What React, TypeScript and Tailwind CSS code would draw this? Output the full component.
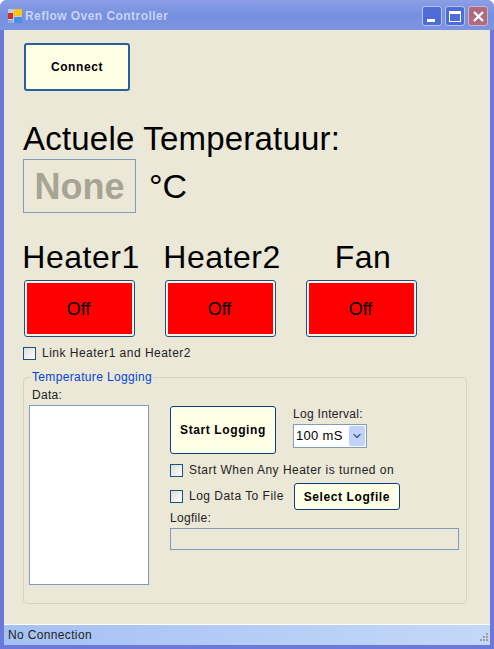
import { ChevronDown } from "lucide-react";

const font = "font-['Liberation_Sans',Arial,sans-serif]";

function HeaterColumn({ label }: { label: string }) {
  return (
    <div className="flex w-[111px] flex-col items-center">
      <div className="h-[43px] whitespace-nowrap pl-[3px] text-[32px] leading-[43px] tracking-[0.5px] text-black">{label}</div>
      <button className="mt-[1px] h-[57px] w-[111px] rounded-[3px] border border-[#1f4e79] bg-[#f6f5ee] p-[2px]">
        <span className="flex h-full w-full items-center justify-center bg-[#ff0000] pr-[2px] pt-[2px] text-[18px] text-black">Off</span>
      </button>
    </div>
  );
}

function CheckBox({ label }: { label: string }) {
  return (
    <div className="flex items-center">
      <span className="h-[13px] w-[13px] shrink-0 border border-[#1c5180] bg-gradient-to-br from-[#dcdcd7] to-white" />
      <span className="ml-[6px] whitespace-nowrap text-[12px] leading-[14px] tracking-[0.48px] text-[#222]">{label}</span>
    </div>
  );
}

function YellowButton({ label, className }: { label: string; className: string }) {
  return (
    <button
      className={`flex items-center justify-center rounded-[3px] bg-[#ffffe6] text-[12px] font-bold tracking-[0.6px] text-black ${className}`}
    >
      {label}
    </button>
  );
}

export default function App() {
  return (
    <div className={`flex h-[649px] w-[494px] flex-col overflow-hidden rounded-t-[7px] bg-[#6c78dc] ${font}`}>
      {/* Title bar */}
      <div className="flex h-[30px] shrink-0 items-center bg-gradient-to-b from-[#8b9fe6] via-[#7690e0] to-[#7b95e2] pl-[8px] pr-[6px]">
        <svg width="14" height="14" viewBox="0 0 14 14" className="mt-[2px]">
          <rect x="0" y="0" width="14" height="14" fill="#c8c8d8" />
          <rect x="6" y="0" width="8" height="7" fill="#f5c518" />
          <rect x="0" y="4" width="5" height="6" fill="#d03020" />
          <rect x="6" y="8" width="8" height="6" fill="#4a90e0" />
          <rect x="0" y="11" width="5" height="3" fill="#8ab0e8" />
        </svg>
        <span className="ml-[3px] mt-[1px] text-[12px] font-bold tracking-[0.45px] text-[#c9d4f4]">Reflow Oven Controller</span>
        <div className="ml-auto mt-[2px] flex gap-[3px]">
          <div className="flex h-[20px] w-[20px] items-end rounded-[3px] border border-[#b4c4f0] bg-[#4f6bd8] pb-[3px] pl-[4px]">
            <span className="h-[3px] w-[8px] bg-white" />
          </div>
          <div className="flex h-[20px] w-[20px] items-center justify-center rounded-[3px] border border-[#b4c4f0] bg-[#4f6bd8]">
            <span className="h-[11px] w-[12px] border border-t-[3px] border-white" />
          </div>
          <div className="flex h-[20px] w-[20px] items-center justify-center rounded-[3px] border border-[#d0b4c4] bg-[#b06a80]">
            <svg width="13" height="13" viewBox="0 0 13 13">
              <path d="M2 2 L11 11 M11 2 L2 11" stroke="#fff" strokeWidth="2.4" />
            </svg>
          </div>
        </div>
      </div>

      {/* Form */}
      <div className="mx-[4px] flex-1 bg-[#ebe8d8] pl-[20px] pt-[13px]">
        <YellowButton label="Connect" className="h-[48px] w-[106px] border-2 border-[#2a5f9e]" />

        <div className="ml-[-1px] mt-[26px] h-[43px] text-[33px] leading-[43px] tracking-[0.2px] text-black">Actuele Temperatuur:</div>

        <div className="mt-[-1px] flex items-center">
          <div className="ml-[-1px] flex h-[54px] w-[113px] items-center justify-center border border-[#7f9db9] pt-[2px] text-[36px] font-bold text-[#a8a494]">
            None
          </div>
          <span className="ml-[13px] text-[34px] text-black">°C</span>
        </div>

        <div className="mt-[23px] flex gap-[30px]">
          <HeaterColumn label="Heater1" />
          <HeaterColumn label="Heater2" />
          <HeaterColumn label="Fan" />
        </div>

        <div className="ml-[-1px] mt-[9px]">
          <CheckBox label="Link Heater1 and Heater2" />
        </div>

        {/* Temperature Logging group */}
        <fieldset className="ml-[-1px] mt-[10px] h-[234px] w-[444px] rounded-[4px] border border-[#d6d3c2] pl-[5px]">
          <legend className="ml-[2px] px-[1px] text-[12px] leading-[14px] tracking-[0.35px] text-[#0046d5]">Temperature Logging</legend>
          <div className="mt-[4px] pl-[3px] text-[12px] leading-[14px] tracking-[0.3px] text-[#222]">Data:</div>
          <div className="flex">
            <div className="mt-[3px] h-[180px] w-[120px] shrink-0 border border-[#7f9db9] bg-white" />
            <div className="ml-[21px] mt-[4px] flex flex-col">
              <div className="flex">
                <YellowButton label="Start Logging" className="h-[48px] w-[106px] border border-[#0a3f7a]" />
                <div className="ml-[17px] mt-[1px]">
                  <div className="text-[12px] leading-[14px] tracking-[0.3px] text-[#222]">Log Interval:</div>
                  <div className="mt-[3px] flex h-[24px] w-[74px] items-center border border-[#7f9db9] bg-white pl-[2px]">
                    <span className="text-[13px] tracking-[0.3px] text-black">100 mS</span>
                    <span className="ml-auto mr-[1px] flex h-[20px] w-[16px] items-center justify-center rounded-[2px] bg-[#c1d3fb]">
                      <ChevronDown size={12} strokeWidth={3} className="text-[#4d6185]" />
                    </span>
                  </div>
                </div>
              </div>
              <div className="mt-[9px]">
                <CheckBox label="Start When Any Heater is turned on" />
              </div>
              <div className="mt-[5px] flex items-center">
                <CheckBox label="Log Data To File" />
                <YellowButton label="Select Logfile" className="ml-[10px] mt-[1px] h-[27px] w-[106px] border border-[#0a3f7a]" />
              </div>
              <div className="mt-[1px] text-[12px] leading-[14px] tracking-[0.3px] text-[#222]">Logfile:</div>
              <div className="mt-[3px] h-[22px] w-[289px] border border-[#7f9db9]" />
            </div>
          </div>
        </fieldset>
      </div>

      {/* Status bar */}
      <div className="mx-[4px] mb-[4px] flex h-[21px] shrink-0 items-center justify-between border-t border-white bg-gradient-to-r from-[#a5c0f3] to-[#c4d8f8] pl-[4px]">
        <span className="text-[12px] tracking-[0.35px] text-[#222]">No Connection</span>
        <svg width="12" height="12" viewBox="0 0 12 12" className="mr-[1px] mt-[6px]">
          <g fill="#9a9aa8">
            <rect x="9" y="1" width="2" height="2" />
            <rect x="6" y="4" width="2" height="2" />
            <rect x="9" y="4" width="2" height="2" />
            <rect x="3" y="7" width="2" height="2" />
            <rect x="6" y="7" width="2" height="2" />
            <rect x="9" y="7" width="2" height="2" />
          </g>
        </svg>
      </div>
    </div>
  );
}
